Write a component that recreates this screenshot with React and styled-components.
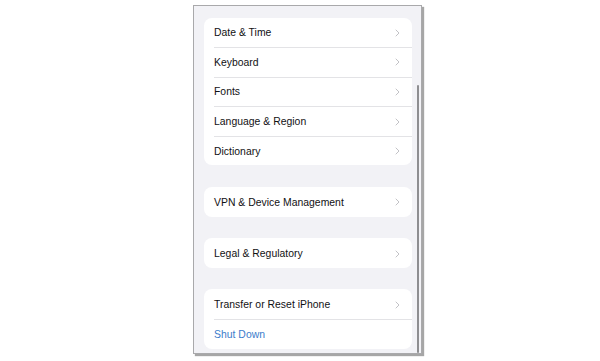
import React from 'react';
import styled, { createGlobalStyle } from 'styled-components';

const GlobalStyle = createGlobalStyle`
  html, body {
    margin: 0;
    padding: 0;
    background: #ffffff;
  }
  body {
    font-family: "Liberation Sans", Arial, sans-serif;
  }
`;

const Page = styled.div`
  width: 600px;
  height: 361px;
  padding: 5px 0 0 193px;
  box-sizing: border-box;
  overflow: hidden;
`;

const Phone = styled.div`
  position: relative;
  width: 229px;
  height: 349px;
  box-sizing: border-box;
  background: #f2f2f6;
  border: 1px solid #a9a9ab;
  box-shadow: 2px 2px 1px rgba(0, 0, 0, 0.35);
  padding: 11.5px 9px 0 10px;
  display: flex;
  flex-direction: column;
  gap: 21.6px;
  overflow: hidden;
`;

const ScrollBar = styled.div`
  position: absolute;
  right: 2px;
  top: 79px;
  bottom: 0;
  width: 2px;
  background: #8e8e91;
  border-radius: 1px;
`;

const Card = styled.div`
  background: #ffffff;
  border-radius: 8px;
  display: flex;
  flex-direction: column;
`;

const Row = styled.div`
  height: 29.6px;
  display: flex;
  align-items: center;
  justify-content: space-between;
  padding: 1px 12px 0 10px;
  box-sizing: border-box;
  position: relative;

  & + &::before {
    content: '';
    position: absolute;
    left: 10px;
    right: 0;
    top: 0;
    height: 1px;
    background: #e3e3e6;
  }
`;

const Label = styled.span`
  font-size: 10.4px;
  color: ${p => (p.$link ? '#3b7ccb' : '#111113')};
  letter-spacing: 0.02px;
`;

const Chevron = () => (
  <svg width="5" height="8" viewBox="0 0 5 8">
    <path d="M1 1 L4 4 L1 7" fill="none" stroke="#c2c2c6" strokeWidth="1" strokeLinecap="round" strokeLinejoin="round" />
  </svg>
);

const groups = [
  ['Date & Time', 'Keyboard', 'Fonts', 'Language & Region', 'Dictionary'],
  ['VPN & Device Management'],
  ['Legal & Regulatory'],
  ['Transfer or Reset iPhone'],
];

const App = () => (
  <Page>
    <GlobalStyle />
    <Phone>
      {groups.map((items, gi) => (
        <Card key={gi}>
          {items.map(item => (
            <Row key={item}>
              <Label>{item}</Label>
              <Chevron />
            </Row>
          ))}
          {gi === groups.length - 1 && (
            <Row>
              <Label $link>Shut Down</Label>
            </Row>
          )}
        </Card>
      ))}
      <ScrollBar />
    </Phone>
  </Page>
);

export default App;
